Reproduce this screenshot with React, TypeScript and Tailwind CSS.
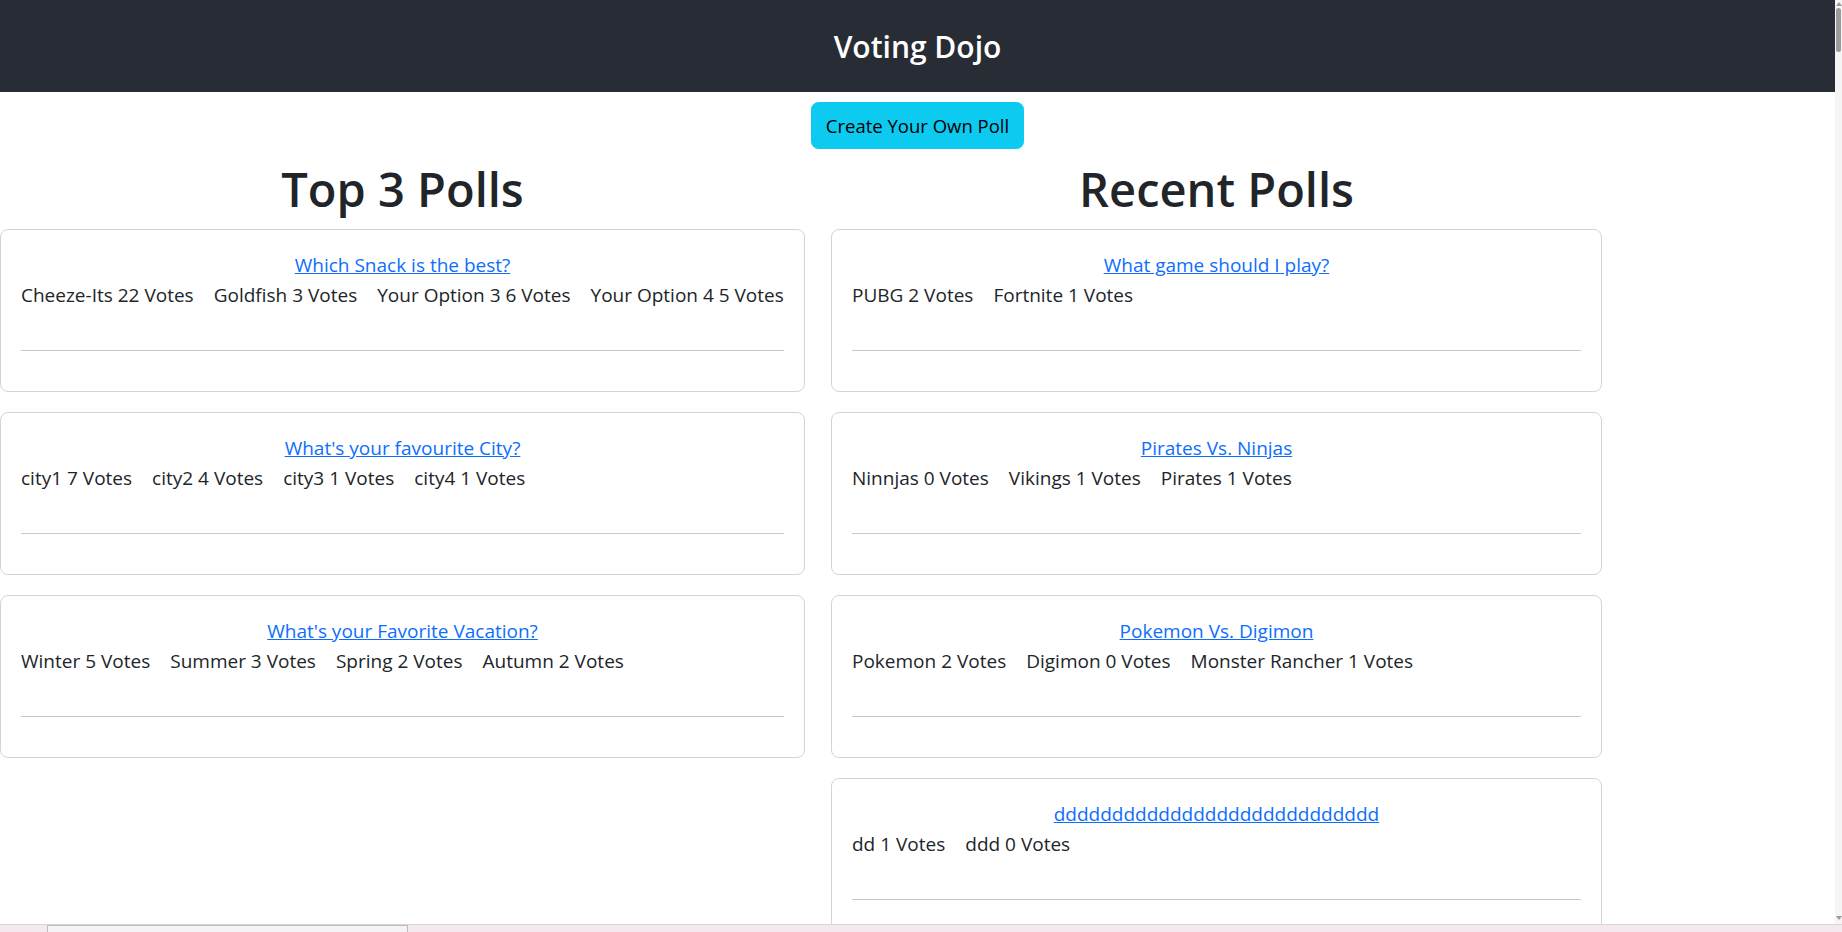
import React from "react";

type Poll = { title: string; options: [string, number][] };

const top: Poll[] = [
  {
    title: "Which Snack is the best?",
    options: [
      ["Cheeze-Its", 22],
      ["Goldfish", 3],
      ["Your Option 3", 6],
      ["Your Option 4", 5],
    ],
  },
  {
    title: "What's your favourite City?",
    options: [
      ["city1", 7],
      ["city2", 4],
      ["city3", 1],
      ["city4", 1],
    ],
  },
  {
    title: "What's your Favorite Vacation?",
    options: [
      ["Winter", 5],
      ["Summer", 3],
      ["Spring", 2],
      ["Autumn", 2],
    ],
  },
];

const recent: Poll[] = [
  {
    title: "What game should I play?",
    options: [
      ["PUBG", 2],
      ["Fortnite", 1],
    ],
  },
  {
    title: "Pirates Vs. Ninjas",
    options: [
      ["Ninnjas", 0],
      ["Vikings", 1],
      ["Pirates", 1],
    ],
  },
  {
    title: "Pokemon Vs. Digimon",
    options: [
      ["Pokemon", 2],
      ["Digimon", 0],
      ["Monster Rancher", 1],
    ],
  },
  {
    title: "dddddddddddddddddddddddddddd",
    options: [
      ["dd", 1],
      ["ddd", 0],
    ],
  },
];

function Card({ poll }: { poll: Poll }) {
  return (
    <div className="border border-[#d3d4d5] rounded-[8px] mb-[20px] bg-white">
      <div className="p-[20px]">
        <div className="text-center leading-[30px]">
          <a href="#" className="text-[#0d6efd] underline whitespace-nowrap">
            {poll.title}
          </a>
        </div>
        <p className="leading-[30px] mb-[40px] flex whitespace-nowrap">
          {poll.options.map(([n, v], i) => (
            <span key={i} className="mr-[20px]">
              {n} {v} Votes
            </span>
          ))}
        </p>
        <hr className="mt-0 mb-[20px] border-0 border-t border-[#c8c9ca]" />
      </div>
    </div>
  );
}

export default function App() {
  return (
    <div className="h-[932px] w-full flex flex-col overflow-hidden bg-white text-[#212529] font-['Open_Sans',sans-serif] text-[19px]">
      <div className="flex flex-1 min-h-0">
        <div className="flex-1 min-w-0 overflow-hidden">
          <header className="h-[92px] bg-[#282c34] flex items-center justify-center text-white text-[30px] font-semibold">
            Voting Dojo
          </header>
          <div className="flex justify-center mt-[10px]">
            <button className="h-[47px] px-[14px] rounded-[7.5px] bg-[#0dcaf0] text-black text-[18.5px] leading-[30px] border border-[#0dcaf0]">
              Create Your Own Poll
            </button>
          </div>
          <div className="flex items-start gap-[26px] mt-[10px]">
            <section className="w-[805px] shrink-0">
              <h1 className="text-[47px] font-semibold leading-[60px] text-center mb-[10px]">
                Top 3 Polls
              </h1>
              {top.map((p, i) => (
                <Card key={i} poll={p} />
              ))}
            </section>
            <section className="w-[771px] shrink-0">
              <h1 className="text-[47px] font-semibold leading-[60px] text-center mb-[10px]">
                Recent Polls
              </h1>
              {recent.map((p, i) => (
                <Card key={i} poll={p} />
              ))}
            </section>
          </div>
        </div>
        <div className="w-[7px] bg-[#f5f5f5] flex flex-col items-center">
          <div className="h-[6px] flex items-end justify-center">
            <div className="w-0 h-0 border-l-[3px] border-r-[3px] border-b-[4px] border-l-transparent border-r-transparent border-b-[#9a9a9a]" />
          </div>
          <div className="mt-[2px] w-[5px] h-[44px] rounded-[3px] bg-[#9b9b9b]" />
          <div className="flex-1" />
          <div className="h-[8px] flex items-start justify-center">
            <div className="w-0 h-0 border-l-[3px] border-r-[3px] border-t-[4px] border-l-transparent border-r-transparent border-t-[#9a9a9a]" />
          </div>
        </div>
      </div>
      <div className="h-[8px] border-t border-[#d6d6d6] bg-[#f3e9ee] flex">
        <div className="ml-[47px] w-[361px] h-full bg-[#f7f2f5] border-x border-t border-[#bdbdbd]" />
      </div>
    </div>
  );
}
